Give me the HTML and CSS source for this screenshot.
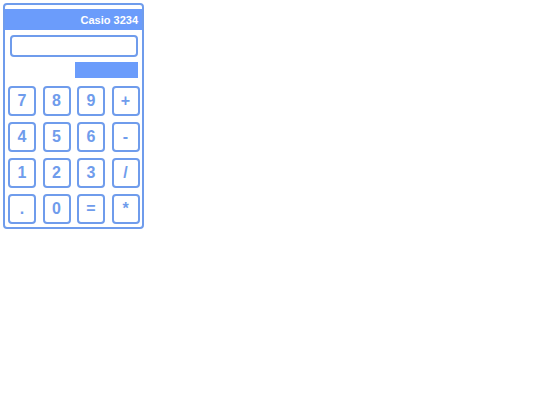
FILE: index.html
```
<!DOCTYPE html>
<html lang="en">

<head>
    <meta charset="UTF-8">
    <meta name="viewport" content="width=device-width, initial-scale=1.0">
    <title>Calculator</title>
    <link rel="stylesheet" href="styles.css">
</head>

<body>
    <div class="calc">
        <div class="title">Casio 3234</div>
        <input class="screen" type="text">
        <div class="memory-row">
            <div class="memory"></div>
        </div>
        <div class="keys">
            <button class="key">7</button>
            <button class="key">8</button>
            <button class="key">9</button>
            <button class="key">+</button>
            <button class="key">4</button>
            <button class="key">5</button>
            <button class="key">6</button>
            <button class="key">-</button>
            <button class="key">1</button>
            <button class="key">2</button>
            <button class="key">3</button>
            <button class="key">/</button>
            <button class="key">.</button>
            <button class="key">0</button>
            <button class="key">=</button>
            <button class="key">*</button>
        </div>
    </div>
</body>

</html>
```

FILE: styles.css
```
body {
    margin: 0;
    background-color: #fff;
    font-family: "Liberation Sans", Arial, sans-serif;
}

.calc {
    margin: 3px;
    width: 137px;
    padding-top: 4px;
    padding-bottom: 3px;
    border: 2px solid #6f9cec;
    border-radius: 4px;
}

.title {
    height: 21px;
    line-height: 23px;
    background-color: #6b9cfb;
    color: #fff;
    font-weight: bold;
    font-size: 11px;
    text-align: right;
    padding-right: 4px;
}

.screen {
    display: block;
    box-sizing: border-box;
    width: 128px;
    height: 22px;
    margin: 5px 0 0 5px;
    border: 2px solid #6f9cec;
    border-radius: 4px;
    outline: none;
}

.memory-row {
    display: flex;
    justify-content: flex-end;
    padding-right: 4px;
    margin-top: 5px;
}

.memory {
    width: 63px;
    height: 16px;
    background-color: #6b9cfb;
}

.keys {
    display: grid;
    grid-template-columns: repeat(4, 28px);
    grid-auto-rows: 30px;
    column-gap: 6.5px;
    row-gap: 6px;
    padding-left: 3px;
    margin-top: 8px;
}

.key {
    box-sizing: border-box;
    margin: 0;
    padding: 0;
    background-color: #fff;
    border: 2px solid #6f9cec;
    border-radius: 4px;
    color: #6f9cec;
    font-family: "Liberation Sans", Arial, sans-serif;
    font-weight: bold;
    font-size: 16px;
}
```
